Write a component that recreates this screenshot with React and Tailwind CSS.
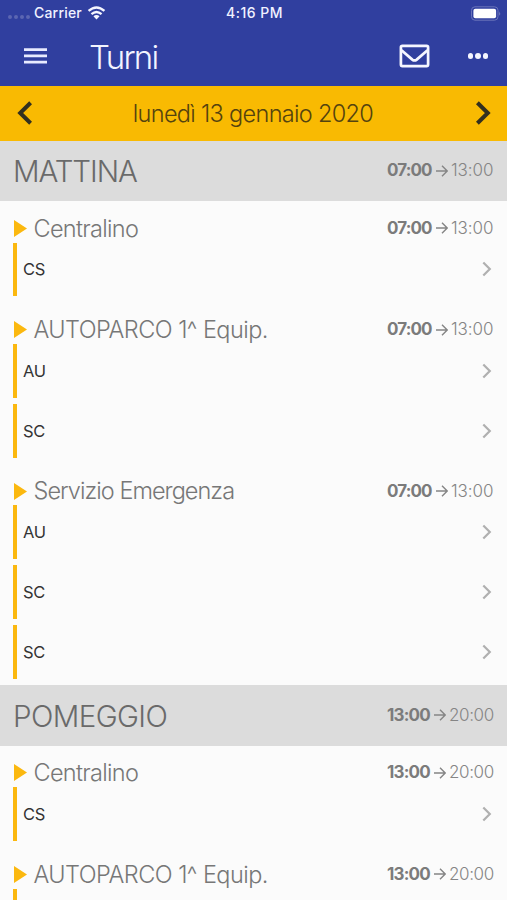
const SECTIONS = [
  {
    name: "MATTINA",
    spacing: "tracking-[-1.1px]",
    from: "07:00",
    to: "13:00",
    groups: [
      { name: "Centralino", spacing: "tracking-[-0.7px]", roles: ["CS"] },
      { name: "AUTOPARCO 1^ Equip.", spacing: "tracking-[-0.54px]", roles: ["AU", "SC"] },
      { name: "Servizio Emergenza", spacing: "tracking-[-0.97px]", roles: ["AU", "SC", "SC"] },
    ],
  },
  {
    name: "POMEGGIO",
    spacing: "tracking-[-0.6px]",
    from: "13:00",
    to: "20:00",
    groups: [
      { name: "Centralino", spacing: "tracking-[-0.7px]", roles: ["CS"] },
      { name: "AUTOPARCO 1^ Equip.", spacing: "tracking-[-0.54px]", roles: [""] },
    ],
  },
];

function Hours({ from, to }) {
  const evening = to === "20:00";
  return (
    <div className="flex items-center whitespace-nowrap text-[17px] leading-none">
      <span className={"-ml-px font-bold text-[#7b7b7b] " + (evening ? "w-[44px] tracking-[-0.8px]" : "w-[46px] tracking-[-0.9px]")}>{from}</span>
      <svg className="ml-[3px] mr-[3px] h-3 w-3" viewBox="0 0 12 12" fill="none" stroke="#858585" strokeWidth="1.4">
        <path d="M0 6H11.2M6 0.8L11.2 6L6 11.2" />
      </svg>
      <span className={"font-light text-[#858585] " + (evening ? "w-[45px] tracking-[-0.4px]" : "w-[43px] tracking-[-0.1px]")}>{to}</span>
    </div>
  );
}

function Role({ label }) {
  return (
    <div className="h-[59.9px]">
      <div className="flex h-[53.6px] items-center justify-between border-l-4 border-[#fbb80f] pl-[6px] pr-[2px]">
        <span className="text-[16.5px] leading-none tracking-[-0.4px] text-[#333]">{label}</span>
        <svg className="h-4 w-[10px]" viewBox="0 0 10 16" fill="none" stroke="#b0b0b0" strokeWidth="2.2">
          <path d="M1.3 1.5L7.8 8L1.3 14.5" />
        </svg>
      </div>
    </div>
  );
}

function Group({ group, from, to }) {
  return (
    <div className="pl-[13px] pr-[13px]">
      <div className="flex h-[41.5px] items-center justify-between pt-[13px]">
        <div className="flex items-center">
          <svg className="mr-[6.5px] h-[17px] w-[14px]" viewBox="0 0 14 17" fill="#fbb80f">
            <path d="M1 0L14 8.5L1 17Z" />
          </svg>
          <span className={"whitespace-nowrap text-[23.5px] font-light leading-none text-[#777] " + group.spacing}>{group.name}</span>
        </div>
        <Hours from={from} to={to} />
      </div>
      {group.roles.map((role, i) => (
        <Role key={i} label={role} />
      ))}
    </div>
  );
}

function StatusBar() {
  return (
    <div className="grid h-[26px] grid-cols-3 items-center pl-2 pr-[6px] text-[14px] font-medium leading-none text-[#f0f2ff]">
      <div className="flex items-center">
        <div className="mt-[7px] flex gap-[2px]">
          {[0, 1, 2, 3].map((n) => (
            <i key={n} className="h-[4px] w-[4px] rounded-full bg-[#5b66b2]" />
          ))}
        </div>
        <span className="ml-[4px] tracking-[0.2px]">Carrier</span>
        <svg className="ml-[5px] h-[14px] w-[19px]" viewBox="0 0 19 15" fill="none" stroke="#f5f6ff" strokeWidth="2.5">
          <path d="M1 5.3Q9.5 -2.2 18 5.3M4.1 8.8Q9.5 4.1 14.9 8.8" />
          <path d="M9.5 14.4L6.2 11.1Q9.5 8.4 12.8 11.1Z" fill="#f5f6ff" stroke="none" />
        </svg>
      </div>
      <span className="text-center tracking-[0.5px]">4:16 PM</span>
      <svg className="h-[15px] w-[31px] justify-self-end" viewBox="0 0 31 15">
        <rect x="1.5" y="0.8" width="26.5" height="13.4" rx="3.5" fill="none" stroke="#6a74ba" />
        <rect x="3.4" y="2.7" width="22.7" height="9.6" rx="2" fill="#fff" />
        <path d="M29.3 5.2Q31 7.5 29.3 9.8Z" fill="#8189c4" />
      </svg>
    </div>
  );
}

export default function App() {
  return (
    <div className="h-[900px] w-[507px] overflow-hidden bg-[#fbfbfb] font-['Inter','Liberation_Sans',sans-serif]">
      <header className="h-[86px] bg-[#303f9f]">
        <StatusBar />
        <div className="flex h-[60px] items-center pl-6 pr-[19px]">
          <svg className="h-4 w-[23px]" viewBox="0 0 23 16" fill="#e8ebff">
            <path d="M0 0.3H23V2.9H0ZM0 6.6H23V9.2H0ZM0 12.8H23V15.4H0Z" />
          </svg>
          <h1 className="ml-[42px] pt-[2px] text-[33px] font-light leading-none tracking-[-1.8px] text-[#f2f4ff]">Turni</h1>
          <svg className="ml-auto h-[24px] w-[31px]" viewBox="0 0 31 24" fill="none" stroke="#f5f6ff" strokeWidth="2.7">
            <rect x="1.9" y="1.9" width="27.2" height="20.2" rx="1.5" />
            <path d="M2.5 6.2L13.3 15.6Q15.5 17.3 17.7 15.6L28.5 6.2" strokeWidth="2.7" />
          </svg>
          <div className="ml-[38px] flex gap-[2px]">
            {[0, 1, 2].map((n) => (
              <i key={n} className="h-[5.5px] w-[5.5px] rounded-full bg-[#f5f6ff]" />
            ))}
          </div>
        </div>
      </header>
      <div className="flex h-[54.6px] items-center justify-between bg-[#f9ba02] pl-[17px] pr-[16px]">
        <svg className="h-6 w-4" viewBox="0 0 16 24" fill="none" stroke="#33301f" strokeWidth="4">
          <path d="M13.6 1.8L3.2 12L13.6 22.2" />
        </svg>
        <span className="-ml-[2px] whitespace-nowrap text-[23.5px] font-light leading-none tracking-[-0.68px] text-[#54430f]">lunedì 13 gennaio 2020</span>
        <svg className="h-6 w-4" viewBox="0 0 16 24" fill="none" stroke="#33301f" strokeWidth="4">
          <path d="M2.4 1.8L12.8 12L2.4 22.2" />
        </svg>
      </div>
      {SECTIONS.map((s) => (
        <section key={s.name}>
          <div className="flex h-[60.6px] items-center justify-between bg-[#dcdcdc] px-[13px]">
            <h2 className={"pt-[2px] text-[29.5px] font-light leading-none text-[#6a6a6a] " + s.spacing}>{s.name}</h2>
            <Hours from={s.from} to={s.to} />
          </div>
          {s.groups.map((g) => (
            <Group key={g.name} group={g} from={s.from} to={s.to} />
          ))}
        </section>
      ))}
    </div>
  );
}
